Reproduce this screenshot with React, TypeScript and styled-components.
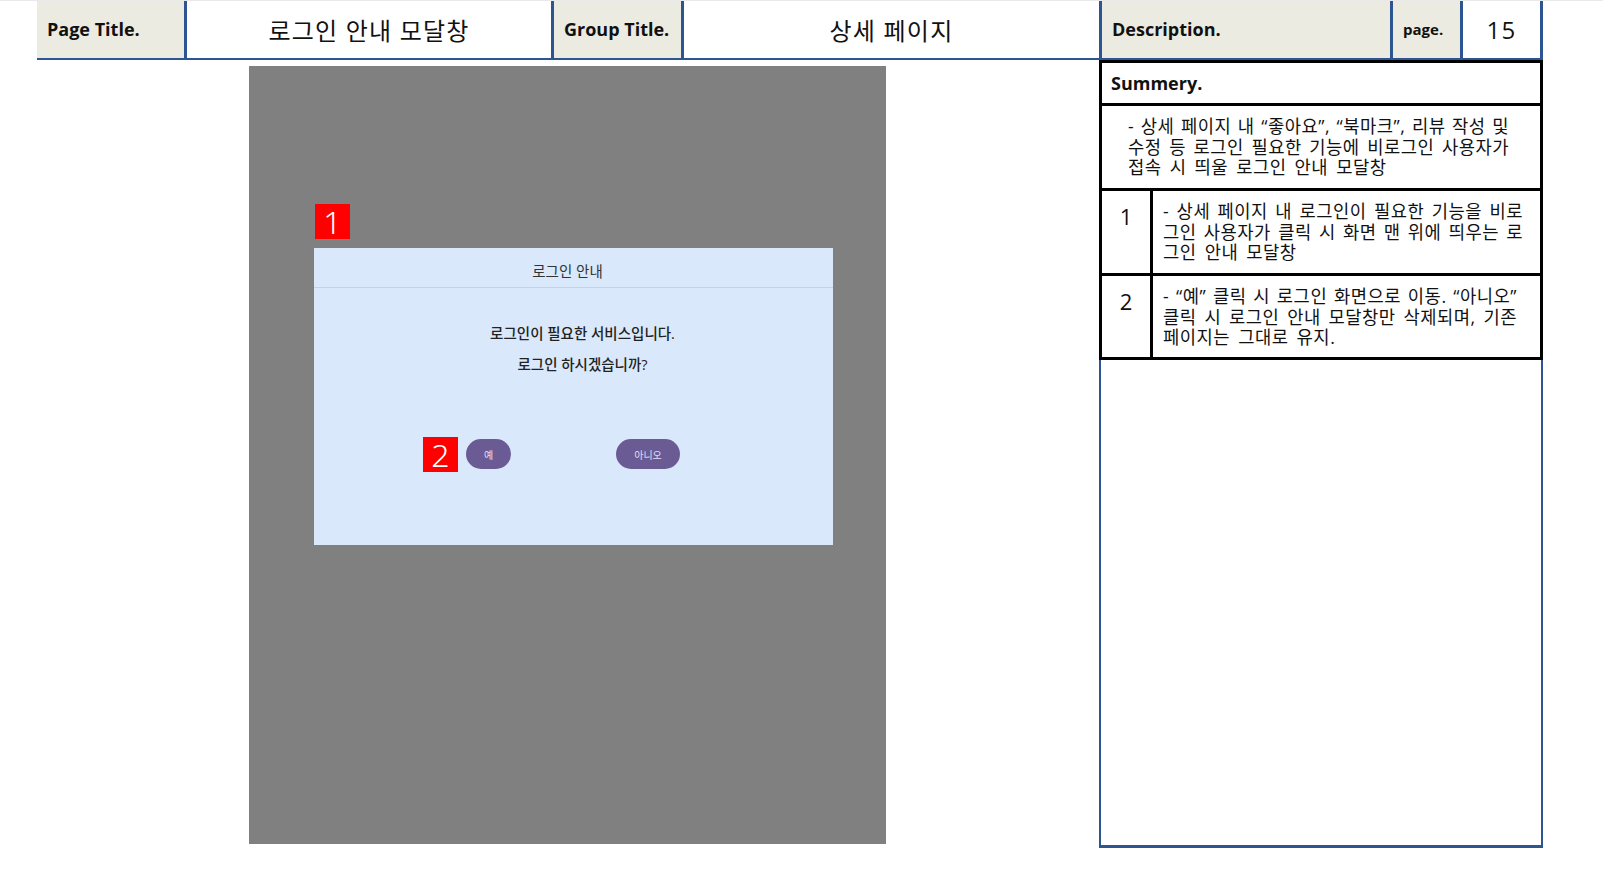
import styled, { createGlobalStyle } from "styled-components";

const GlobalStyle = createGlobalStyle`
  body {
    margin: 0;
    background: #ffffff;
    font-family: "Open Sans", "Noto Sans CJK KR", sans-serif;
    color: #111111;
  }
`

const BLUE = "#2d5592";

const Page = styled.div`
  width: 1603px;
  height: 890px;
  overflow: hidden;
`
const TopRule = styled.div`
  height: 1px;
  background: #e9e9e9;
`
const Sheet = styled.div`
  width: 1506px;
  margin-left: 37px;
`
const Header = styled.div`
  display: grid;
  grid-template-columns: 150px 367px 130px 418px 291px 70px 80px;
  height: 59px;
  border-bottom: 2px solid ${BLUE};
  box-sizing: border-box;
`
const HeadCell = styled.div<{ $label?: boolean; $small?: boolean }>`
  display: flex;
  align-items: center;
  justify-content: ${p => (p.$label ? "flex-start" : "center")};
  padding-left: ${p => (p.$label ? "10px" : "0")};
  padding-bottom: 1px;
  border-right: 3px solid ${BLUE};
  background: ${p => (p.$label ? "#ecebe1" : "#ffffff")};
  font-weight: ${p => (p.$label ? 700 : 400)};
  font-size: ${p => (p.$small ? "15px" : p.$label ? "18px" : "24px")};
  letter-spacing: ${p => (p.$label ? "0" : "1.2px")};
  color: #111111;
  white-space: nowrap;
`
const Body = styled.div`
  display: flex;
  align-items: flex-start;
`
const Phone = styled.div`
  width: 637px;
  height: 778px;
  margin: 6px 0 0 212px;
  padding: 182px 0 0 65px;
  box-sizing: border-box;
  background: #808080;
`
const Modal = styled.div`
  position: relative;
  width: 519px;
  height: 297px;
  background: #dae8fb;
  display: flex;
  flex-direction: column;
`
const ModalHead = styled.div`
  height: 40px;
  box-sizing: border-box;
  border-bottom: 1px solid #c3d2e5;
  display: flex;
  align-items: center;
  justify-content: center;
  padding: 5px 12px 0 0;
  font-size: 14.5px;
  color: #333333;
`
const Message = styled.div`
  padding: 30px 0 0 18px;
  text-align: center;
  font-size: 14.5px;
  font-weight: 500;
  line-height: 31px;
  color: #222222;
`
const ButtonRow = styled.div`
  display: flex;
  gap: 105px;
  padding: 59px 0 0 152px;
`
const PillButton = styled.button<{ $w: number }>`
  position: relative;
  width: ${p => p.$w}px;
  height: 30px;
  border: none;
  border-radius: 15px;
  background: #6b5b95;
  color: #e4dff0;
  font-family: "Open Sans", "Noto Sans CJK KR", sans-serif;
  font-size: 10px;
  padding: 0;
`
const Badge = styled.div<{ $top: number; $left: number }>`
  position: absolute;
  top: ${p => p.$top}px;
  left: ${p => p.$left}px;
  width: 35px;
  height: 35px;
  background: #ff0000;
  color: #ffffff;
  font-family: "Noto Sans", sans-serif;
  font-size: 32px;
  font-weight: 300;
  line-height: 35px;
  text-align: center;
`
const Panel = styled.div`
  margin-left: auto;
  width: 444px;
  height: 788px;
  display: flex;
  flex-direction: column;
`
const Table = styled.div`
  border: 3px solid #000000;
  border-bottom: none;
`
const Row = styled.div<{ $h: number }>`
  display: flex;
  height: ${p => p.$h}px;
  border-bottom: 3px solid #000000;
`
const SummeryLabel = styled.div`
  display: flex;
  align-items: center;
  padding-left: 9px;
  font-size: 18px;
  font-weight: 700;
`
const NumCell = styled.div`
  width: 48px;
  border-right: 3px solid #000000;
  padding-top: 12px;
  text-align: center;
  font-size: 22px;
  line-height: 26px;
`
const TextCell = styled.div<{ $pl: number; $pr: number }>`
  flex: 1;
  min-width: 0;
  padding: 10px ${p => p.$pr}px 0 ${p => p.$pl}px;
  font-size: 17.7px;
  line-height: 20.5px;
  letter-spacing: 0.5px;
  color: #111111;
`
const Line = styled.div<{ $fill?: boolean }>`
  white-space: nowrap;
  word-spacing: ${p => (p.$fill ? "0" : "3px")};
  text-align: ${p => (p.$fill ? "justify" : "left")};
  text-align-last: ${p => (p.$fill ? "justify" : "left")};
`
const Filler = styled.div`
  flex: 1;
  border: 2px solid ${BLUE};
  border-top: none;
  border-bottom-width: 3px;
`

function Lines({ lines }: { lines: string[] }) {
    return (
        <>
            {lines.map((l, i) => (
                <Line key={i} $fill={i < lines.length - 1}>{l}</Line>
            ))}
        </>
    )
}

export default function App() {
    return (
        <Page>
            <GlobalStyle/>
            <TopRule/>
            <Sheet>
                <Header>
                    <HeadCell $label>Page Title.</HeadCell>
                    <HeadCell>로그인 안내 모달창</HeadCell>
                    <HeadCell $label>Group Title.</HeadCell>
                    <HeadCell>상세 페이지</HeadCell>
                    <HeadCell $label>Description.</HeadCell>
                    <HeadCell $label $small>page.</HeadCell>
                    <HeadCell>15</HeadCell>
                </Header>
                <Body>
                    <Phone>
                        <Modal>
                            <Badge $top={-44} $left={1}>1</Badge>
                            <ModalHead>로그인 안내</ModalHead>
                            <Message>
                                로그인이 필요한 서비스입니다.<br/>
                                로그인 하시겠습니까?
                            </Message>
                            <ButtonRow>
                                <PillButton $w={45}>
                                    <Badge $top={-2} $left={-43}>2</Badge>
                                    예
                                </PillButton>
                                <PillButton $w={64}>아니오</PillButton>
                            </ButtonRow>
                        </Modal>
                    </Phone>
                    <Panel>
                        <Table>
                            <Row $h={40}>
                                <SummeryLabel>Summery.</SummeryLabel>
                            </Row>
                            <Row $h={82}>
                                <TextCell $pl={26} $pr={31}>
                                    <Lines lines={[
                                        "- 상세 페이지 내 “좋아요”, “북마크”, 리뷰 작성 및",
                                        "수정 등 로그인 필요한 기능에 비로그인 사용자가",
                                        "접속 시 띄울 로그인 안내 모달창",
                                    ]}/>
                                </TextCell>
                            </Row>
                            <Row $h={82}>
                                <NumCell>1</NumCell>
                                <TextCell $pl={10} $pr={17}>
                                    <Lines lines={[
                                        "- 상세 페이지 내 로그인이 필요한 기능을 비로",
                                        "그인 사용자가 클릭 시 화면 맨 위에 띄우는 로",
                                        "그인 안내 모달창",
                                    ]}/>
                                </TextCell>
                            </Row>
                            <Row $h={81}>
                                <NumCell>2</NumCell>
                                <TextCell $pl={10} $pr={23}>
                                    <Lines lines={[
                                        "- “예” 클릭 시 로그인 화면으로 이동. “아니오”",
                                        "클릭 시 로그인 안내 모달창만 삭제되며, 기존",
                                        "페이지는 그대로 유지.",
                                    ]}/>
                                </TextCell>
                            </Row>
                        </Table>
                        <Filler/>
                    </Panel>
                </Body>
            </Sheet>
        </Page>
    )
}
